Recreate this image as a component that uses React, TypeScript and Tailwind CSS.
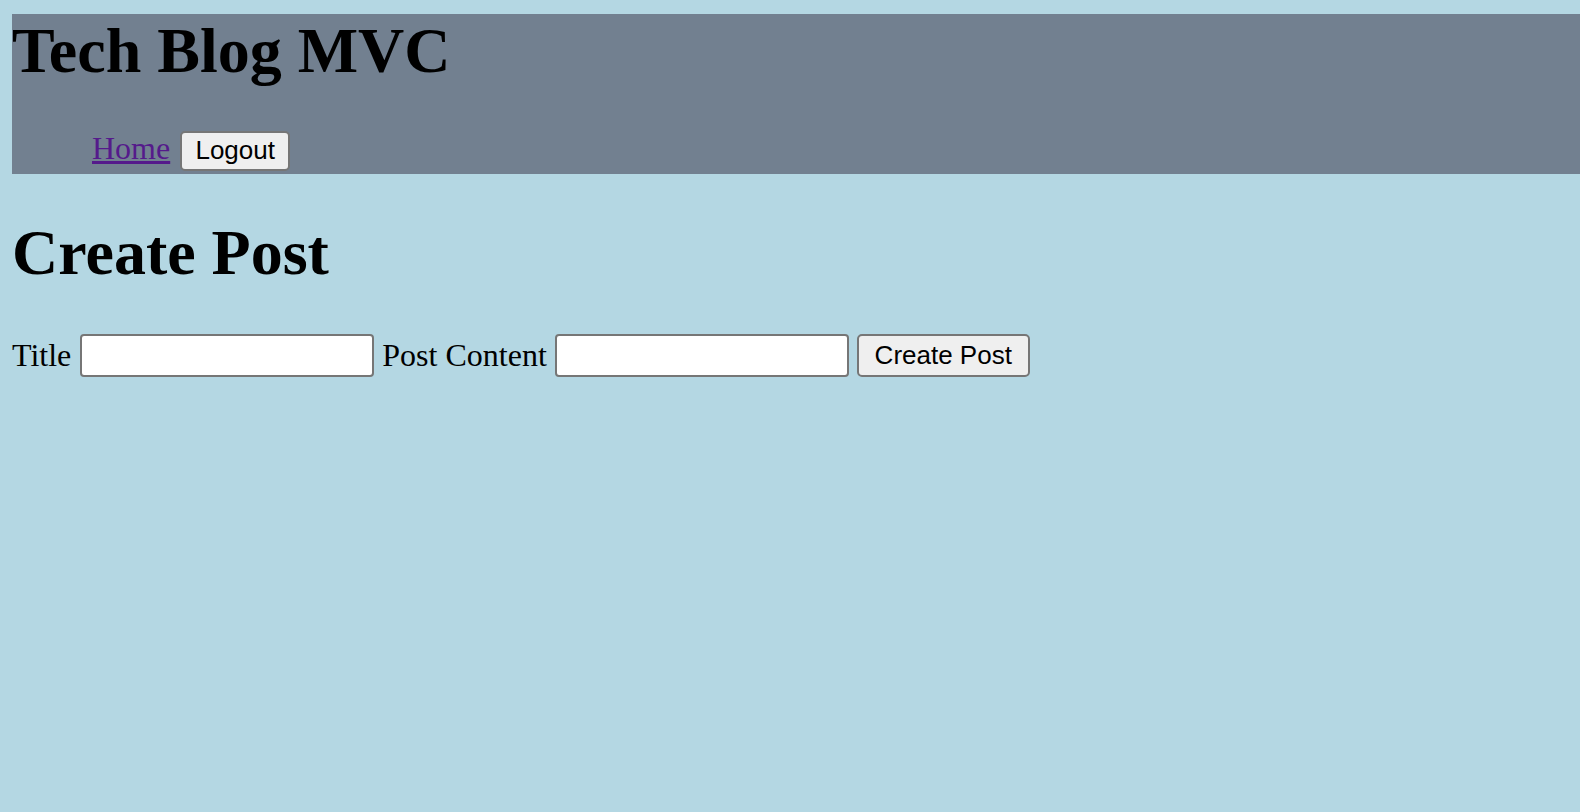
import React from "react";

export default function App() {
  return (
    <div className="h-[812px] w-full overflow-hidden bg-[#b4d7e3] pt-[14px] font-['Liberation_Serif',serif] leading-[normal] text-black">
      <header className="ml-[12px] h-[160px] w-[1568px] bg-[#728090]">
        <h1 className="m-0 text-[64px] font-bold leading-[normal]">Tech Blog MVC</h1>
        <nav className="mt-[42px] flex items-baseline gap-[10px] pl-[80px]">
          <a href="#" className="text-[32px] leading-[normal] text-[#551a8b] underline">
            Home
          </a>
          <button className="flex h-[40px] w-[110px] items-center justify-center rounded-[5px] border-2 border-[#767676] bg-[#efefef] font-['Liberation_Sans',Arial,sans-serif] text-[26px] leading-[normal] text-black">
            Logout
          </button>
        </nav>
      </header>
      <main className="pl-[12px]">
        <h1 className="mt-[42px] text-[64px] font-bold leading-[normal]">Create Post</h1>
        <form className="mt-[44px] flex items-center gap-[8px]" onSubmit={(e) => e.preventDefault()}>
          <label className="mr-[1px] text-[32px] leading-[normal]">Title</label>
          <input
            type="text"
            className="h-[43px] w-[294px] rounded-[4px] border-2 border-[#767676] bg-white px-[4px] font-['Liberation_Sans',Arial,sans-serif] text-[26px]"
          />
          <label className="text-[32px] leading-[normal]">Post Content</label>
          <input
            type="text"
            className="h-[43px] w-[294px] rounded-[4px] border-2 border-[#767676] bg-white px-[4px] font-['Liberation_Sans',Arial,sans-serif] text-[26px]"
          />
          <button
            type="submit"
            className="flex h-[43px] w-[173px] items-center justify-center rounded-[5px] border-2 border-[#767676] bg-[#efefef] font-['Liberation_Sans',Arial,sans-serif] text-[26px] leading-[normal] text-black"
          >
            Create Post
          </button>
        </form>
      </main>
    </div>
  );
}
